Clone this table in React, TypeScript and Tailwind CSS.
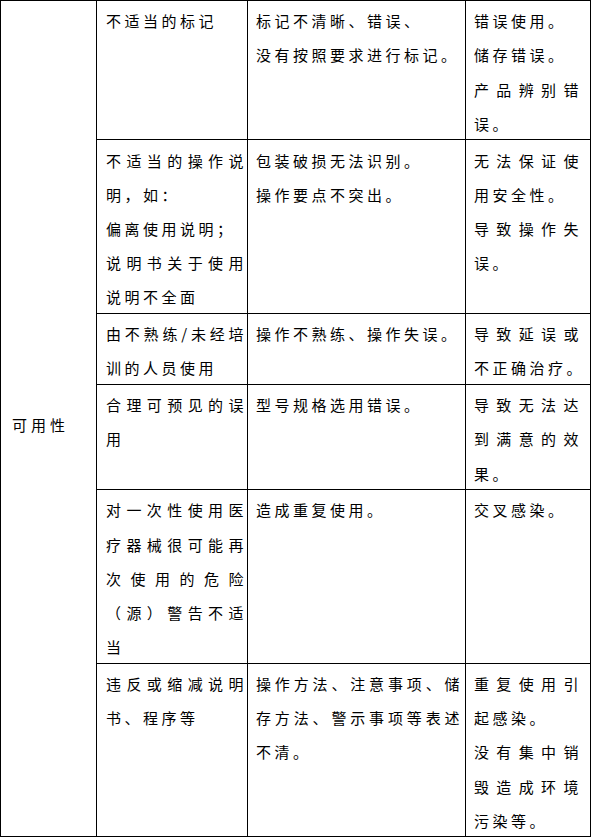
import React from 'react';

type Row = {
  hazard: string[];
  cause: string[];
  result: string[];
};

const rows: Row[] = [
  {
    hazard: ['不适当的标记'],
    cause: ['标记不清晰、错误、', '没有按照要求进行标记。'],
    result: ['错误使用。', '储存错误。', '产品辨别错误。'],
  },
  {
    hazard: ['不适当的操作说明，如：', '偏离使用说明；', '说明书关于使用说明不全面'],
    cause: ['包装破损无法识别。', '操作要点不突出。'],
    result: ['无法保证使用安全性。', '导致操作失误。'],
  },
  {
    hazard: ['由不熟练/未经培训的人员使用'],
    cause: ['操作不熟练、操作失误。'],
    result: ['导致延误或不正确治疗。'],
  },
  {
    hazard: ['合理可预见的误用'],
    cause: ['型号规格选用错误。'],
    result: ['导致无法达到满意的效果。'],
  },
  {
    hazard: ['对一次性使用医疗器械很可能再次使用的危险（源）警告不适当'],
    cause: ['造成重复使用。'],
    result: ['交叉感染。'],
  },
  {
    hazard: ['违反或缩减说明书、程序等'],
    cause: ['操作方法、注意事项、储存方法、警示事项等表述不清。'],
    result: ['重复使用引起感染。', '没有集中销毁造成环境污染等。'],
  },
];

const cell =
  'border border-black align-top pt-[1.6px] pb-0 text-justify tracking-[3.5px] leading-[34.2px]';

// the closing 。 keeps its natural advance so it may sit at a full line end
const Paras: React.FC<{ lines: string[] }> = ({ lines }) => (
  <>
    {lines.map((t, i) => {
      const end = t.endsWith('。');
      return (
        <p key={i} className="relative top-[1.5px]">
          {end ? t.slice(0, -1) : t}
          {end && <span className="tracking-normal">。</span>}
        </p>
      );
    })}
  </>
);

export default function App() {
  return (
    <div className="w-[591px] h-[839px] bg-white text-black text-[15px] font-['Noto_Sans_CJK_SC','Noto_Sans',sans-serif]">
      <table className="table-fixed border-collapse w-[590px]">
        <colgroup>
          <col className="w-[96px]" />
          <col className="w-[151px]" />
          <col className="w-[218px]" />
          <col className="w-[125px]" />
        </colgroup>
        <tbody>
          {rows.map((r, i) => (
            <tr key={i}>
              {i === 0 && (
                <td
                  rowSpan={rows.length}
                  className="border border-black align-middle pl-[11px] pt-[12px] tracking-[4px] leading-[34px]"
                >
                  可用性
                </td>
              )}
              <td className={`${cell} pl-[9px] pr-0`}>
                <Paras lines={r.hazard} />
              </td>
              <td className={`${cell} pl-[8px] pr-[2px]`}>
                <Paras lines={r.cause} />
              </td>
              <td className={`${cell} pl-[8px] pr-[8px]`}>
                <Paras lines={r.result} />
              </td>
            </tr>
          ))}
        </tbody>
      </table>
    </div>
  );
}
